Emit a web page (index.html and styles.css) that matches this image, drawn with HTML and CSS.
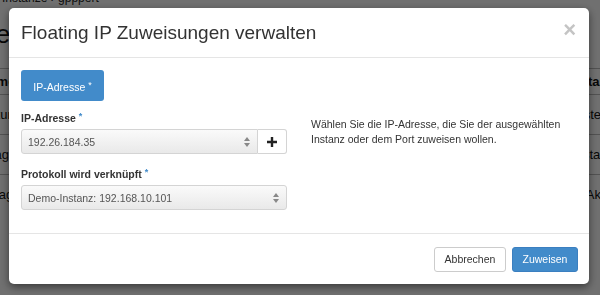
FILE: index.html
```html
<!DOCTYPE html>
<html lang="de">
<head>
<meta charset="UTF-8">
<title>Floating IP Zuweisungen verwalten</title>
<link rel="stylesheet" href="styles.css">
</head>
<body>
    <!-- page behind the dialog -->
    <div class="page">
        <div class="crumbs">Instanze &rsaquo; gpppert</div>
        <div class="page-title">Instance</div>
        <div class="table">
            <div class="row head"><span>Name</span><span>Instanz</span></div>
            <div class="row"><span>Datum</span><span>Bereitgestelld</span></div>
            <div class="row"><span>Image</span><span>Instanz</span></div>
            <div class="row"><span>Ablage</span><span>Aktiv</span></div>
        </div>
    </div>
    <div class="backdrop"></div>

    <div class="modal">
        <div class="modal-header">
            <h3>Floating IP Zuweisungen verwalten</h3>
            <span class="close">&times;</span>
        </div>

        <div class="modal-body">
            <div class="tab-btn">IP-Adresse <span class="req">*</span></div>

            <div class="cols">
                <div class="left">
                    <label class="lbl">IP-Adresse <span class="req blue">*</span></label>
                    <div class="input-group">
                        <div class="select">
                            <span>192.26.184.35</span>
                            <svg class="arrows" width="6" height="10" viewBox="0 0 6 10"><path d="M3 0 L6 4 H0 Z M3 10 L0 6 H6 Z" fill="#888"/></svg>
                        </div>
                        <div class="plus-btn">
                            <svg width="10" height="10" viewBox="0 0 10 10"><path d="M3.8 0h2.4v3.8H10v2.4H6.2V10H3.8V6.2H0V3.8h3.8z" fill="#222"/></svg>
                        </div>
                    </div>

                    <label class="lbl">Protokoll wird verknüpft <span class="req blue">*</span></label>
                    <div class="select wide">
                        <span>Demo-Instanz: 192.168.10.101</span>
                        <svg class="arrows" width="6" height="10" viewBox="0 0 6 10"><path d="M3 0 L6 4 H0 Z M3 10 L0 6 H6 Z" fill="#888"/></svg>
                    </div>
                </div>
                <div class="right">
                    <p>Wählen Sie die IP-Adresse, die Sie der ausgewählten Instanz oder dem Port zuweisen wollen.</p>
                </div>
            </div>
        </div>

        <div class="modal-footer">
            <a class="btn btn-default">Abbrechen</a>
            <a class="btn btn-primary">Zuweisen</a>
        </div>
    </div>
</body>
</html>
```

FILE: styles.css
```css
body {
    margin: 0;
    width: 600px;
    height: 295px;
    overflow: hidden;
    font-family: "Liberation Sans", Arial, sans-serif;
    color: #333;
    background: white;
}

/* page under the overlay */
.page {
    margin-left: -88px;
    margin-top: -9px;
}

.crumbs {
    padding-left: 90px;
    font-size: 12px;
    color: #222;
}

.page-title {
    margin-top: 14px;
    font-size: 26px;
    color: #111;
}

.table {
    margin-top: 18px;
}

.row {
    display: flex;
    justify-content: space-between;
    padding: 5px 0;
    border-top: 1px solid #bbb;
    font-size: 13px;
    color: #111;
}

.row + .row {
    padding: 12px 0;
}

.row.head {
    font-weight: bold;
}

.row span:first-child {
    padding-left: 68px;
}

.row span:last-child {
    margin-right: -14px;
}

.backdrop {
    position: fixed;
    left: 0;
    top: 0;
    width: 600px;
    height: 295px;
    background: rgba(0, 0, 0, 0.56);
}

/* dialog */
.modal {
    position: fixed;
    left: 9px;
    top: 8px;
    width: 580px;
    height: 276px;
    background: white;
    border-radius: 5px;
    box-shadow: 0 3px 9px rgba(0, 0, 0, 0.5);
    display: flex;
    flex-direction: column;
}

.modal-header {
    display: flex;
    justify-content: space-between;
    align-items: flex-start;
    height: 49px;
    padding: 0 12px;
    border-bottom: 1px solid #e5e5e5;
}

.modal-header h3 {
    margin: 0;
    padding-top: 14px;
    font-size: 19px;
    font-weight: normal;
    line-height: 22px;
    color: #333;
}

.close {
    margin-top: 11px;
    margin-right: 1px;
    font-size: 22px;
    font-weight: bold;
    line-height: 22px;
    color: #c4c4c4;
}

.modal-body {
    flex: 1;
    padding: 12px 12px 0 12px;
}

.tab-btn {
    display: inline-block;
    height: 31px;
    width: 83px;
    box-sizing: border-box;
    line-height: 31px;
    text-align: center;
    background: #428bca;
    color: white;
    font-size: 10.5px;
    border-radius: 3px;
}

.req {
    font-size: 9px;
    vertical-align: 3px;
}

.req.blue {
    color: #428bca;
}

.cols {
    display: flex;
    gap: 24px;
    margin-top: 8px;
}

.left {
    width: 266px;
    flex: none;
}

.lbl {
    display: block;
    font-size: 10.5px;
    font-weight: bold;
    line-height: 14px;
    color: #333;
    margin-bottom: 4px;
}

.input-group {
    display: flex;
    margin-bottom: 11px;
}

.select {
    box-sizing: border-box;
    width: 237px;
    height: 25px;
    border: 1px solid #d4d4d4;
    border-radius: 3px;
    background: linear-gradient(#fafafa, #e9e9e9);
    display: flex;
    justify-content: space-between;
    align-items: center;
    padding: 0 7px 0 6px;
    font-size: 10.5px;
    color: #555;
}

.input-group .select {
    border-radius: 3px 0 0 3px;
}

.select.wide {
    width: 266px;
}

.plus-btn {
    box-sizing: border-box;
    width: 29px;
    height: 25px;
    border: 1px solid #d4d4d4;
    border-left: none;
    border-radius: 0 3px 3px 0;
    background: white;
    display: flex;
    align-items: center;
    justify-content: center;
}

.right p {
    margin: 0;
    padding-top: 8px;
    font-size: 10.5px;
    line-height: 15px;
    color: #333;
}

.modal-footer {
    display: flex;
    justify-content: flex-end;
    gap: 6px;
    padding: 13px 11px 12px 0;
    border-top: 1px solid #e5e5e5;
}

.btn {
    box-sizing: border-box;
    height: 25px;
    line-height: 23px;
    padding: 0 6px;
    font-size: 10.5px;
    border-radius: 3px;
    border: 1px solid #ccc;
}

.btn-default {
    background: white;
    color: #333;
    width: 72px;
    text-align: center;
}

.btn-primary {
    background: #428bca;
    border-color: #3b7fc0;
    color: white;
    width: 66px;
    text-align: center;
}
```
